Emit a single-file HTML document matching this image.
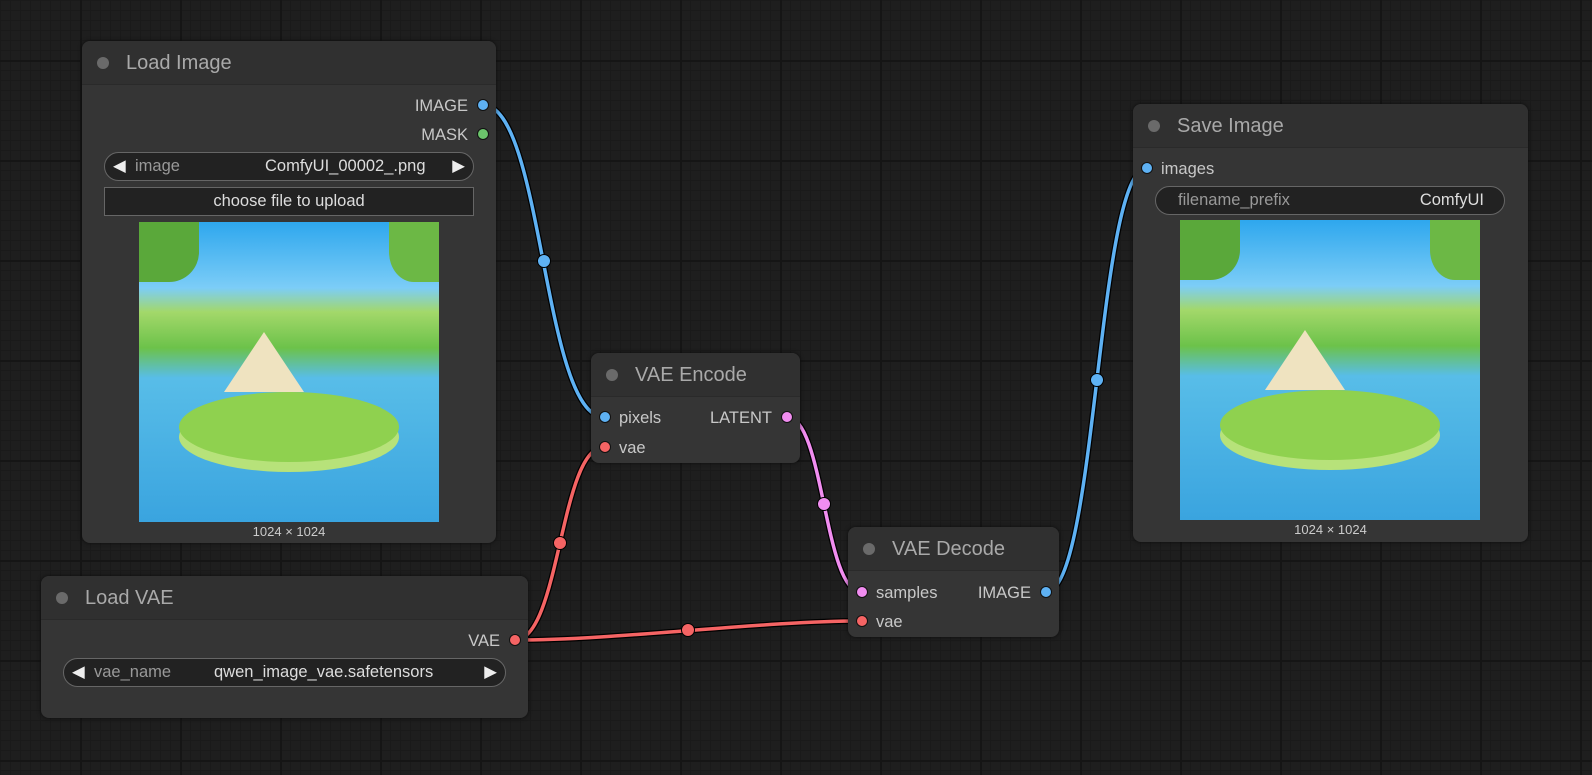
<!DOCTYPE html>
<html><head><meta charset="utf-8"><style>
*{box-sizing:border-box;margin:0;padding:0}
body{width:1592px;height:775px;overflow:hidden;background:#1e1e1e;font-family:"Liberation Sans",sans-serif;position:relative;
background-image:linear-gradient(#151515 2px,transparent 2px),linear-gradient(90deg,#151515 2px,transparent 2px),linear-gradient(#1a1a1a 1px,transparent 1px),linear-gradient(90deg,#1a1a1a 1px,transparent 1px);
background-size:100px 100px,100px 100px,10px 10px,10px 10px;background-position:-20px 60px,-20px 60px,0 0,0 0}
.node{position:absolute;background:#353535;border-radius:8px;box-shadow:0 0 4px rgba(0,0,0,.6)}
.title{height:44px;background:#303030;border-bottom:1px solid #2a2a2a;border-radius:8px 8px 0 0;color:#a9a9a9;font-size:20px;line-height:44px;padding-left:44px;position:relative}
.title:before{content:"";position:absolute;left:15px;top:16px;width:12px;height:12px;border-radius:50%;background:#6a6a6a}
.t{position:absolute;color:#c8c8c8;font-size:16.5px;line-height:18px}
.dot{position:absolute;width:12px;height:12px;border-radius:50%;border:1px solid #111}
.w{position:absolute;height:29px;border:1px solid #666;border-radius:15px;background:#222;font-size:16.5px;line-height:27px;color:#ddd}
.img{position:absolute;overflow:hidden;background:linear-gradient(#2ea7ee 0%,#7ccdf7 22%,#a3d86a 30%,#6cc24a 42%,#58bde8 52%,#3aa4df 100%)}
.cap{position:absolute;color:#ccc;font-size:13px}
</style></head><body>
<svg width="1592" height="775" style="position:absolute;left:0;top:0">
<g fill="none" stroke-linecap="round">
<path d="M483,105 C543,105 543,417 604,417" stroke="#000" stroke-width="6"/><path d="M483,105 C543,105 543,417 604,417" stroke="#5eb1f3" stroke-width="3.5"/>
<path d="M515,640 C560,640 560,447 604,447" stroke="#000" stroke-width="6"/><path d="M515,640 C560,640 560,447 604,447" stroke="#f56464" stroke-width="3.5"/>
<path d="M515,640 C620,640 760,621 861,621" stroke="#000" stroke-width="6"/><path d="M515,640 C620,640 760,621 861,621" stroke="#f56464" stroke-width="3.5"/>
<path d="M787,417 C824,417 824,592 861,592" stroke="#000" stroke-width="6"/><path d="M787,417 C824,417 824,592 861,592" stroke="#f18df0" stroke-width="3.5"/>
<path d="M1046,592 C1097,592 1097,168 1147,168" stroke="#000" stroke-width="6"/><path d="M1046,592 C1097,592 1097,168 1147,168" stroke="#5eb1f3" stroke-width="3.5"/>
</g>
<circle cx="544" cy="261" r="6.5" fill="#5eb1f3" stroke="#000"/>
<circle cx="560" cy="543" r="6.5" fill="#f56464" stroke="#000"/>
<circle cx="688" cy="630" r="6.5" fill="#f56464" stroke="#000"/>
<circle cx="824" cy="504" r="6.5" fill="#f18df0" stroke="#000"/>
<circle cx="1097" cy="380" r="6.5" fill="#5eb1f3" stroke="#000"/>
</svg>

<div class="node" style="left:82px;top:41px;width:414px;height:502px">
<div class="title">Load Image</div>
<div class="t" style="right:28px;top:56px">IMAGE</div><div class="dot" style="right:7px;top:58px;background:#5eb1f3"></div>
<div class="t" style="right:28px;top:85px">MASK</div><div class="dot" style="right:7px;top:87px;background:#6bc46b"></div>
<div class="w" style="left:22px;top:111px;width:370px"><span style="position:absolute;left:8px;color:#eee">◀</span><span style="position:absolute;left:30px;color:#999">image</span><span style="position:absolute;left:160px">ComfyUI_00002_.png</span><span style="position:absolute;right:8px;color:#eee">▶</span></div>
<div style="position:absolute;left:22px;top:146px;width:370px;height:29px;border:1px solid #666;background:#222;color:#ddd;font-size:16.5px;line-height:27px;text-align:center">choose file to upload</div>
<div class="img" style="left:57px;top:181px;width:300px;height:300px"><div style="position:absolute;left:40px;top:170px;width:220px;height:70px;border-radius:50%;background:#8fd14f;box-shadow:0 10px 0 #b7e27a"></div><div style="position:absolute;left:85px;top:110px;width:80px;height:60px;background:#efe3c0;clip-path:polygon(50% 0,100% 100%,0 100%)"></div><div style="position:absolute;left:0;top:0;width:60px;height:60px;background:#5aa83a;border-radius:0 0 50% 0"></div><div style="position:absolute;right:0;top:0;width:50px;height:60px;background:#6cb845;border-radius:0 0 0 50%"></div></div>
<div class="cap" style="left:0;width:414px;text-align:center;top:483px">1024 × 1024</div>
</div>

<div class="node" style="left:41px;top:576px;width:487px;height:142px">
<div class="title">Load VAE</div>
<div class="t" style="right:28px;top:56px">VAE</div><div class="dot" style="right:7px;top:58px;background:#f56464"></div>
<div class="w" style="left:22px;top:82px;width:443px"><span style="position:absolute;left:8px;color:#eee">◀</span><span style="position:absolute;left:30px;color:#999">vae_name</span><span style="position:absolute;left:150px">qwen_image_vae.safetensors</span><span style="position:absolute;right:8px;color:#eee">▶</span></div>
</div>

<div class="node" style="left:591px;top:353px;width:209px;height:110px">
<div class="title">VAE Encode</div>
<div class="dot" style="left:8px;top:58px;background:#5eb1f3"></div><div class="t" style="left:28px;top:56px">pixels</div>
<div class="t" style="right:28px;top:56px">LATENT</div><div class="dot" style="right:7px;top:58px;background:#f18df0"></div>
<div class="dot" style="left:8px;top:88px;background:#f56464"></div><div class="t" style="left:28px;top:86px">vae</div>
</div>

<div class="node" style="left:848px;top:527px;width:211px;height:110px">
<div class="title">VAE Decode</div>
<div class="dot" style="left:8px;top:59px;background:#f18df0"></div><div class="t" style="left:28px;top:57px">samples</div>
<div class="t" style="right:28px;top:57px">IMAGE</div><div class="dot" style="right:7px;top:59px;background:#5eb1f3"></div>
<div class="dot" style="left:8px;top:88px;background:#f56464"></div><div class="t" style="left:28px;top:86px">vae</div>
</div>

<div class="node" style="left:1133px;top:104px;width:395px;height:438px">
<div class="title">Save Image</div>
<div class="dot" style="left:8px;top:58px;background:#5eb1f3"></div><div class="t" style="left:28px;top:56px">images</div>
<div class="w" style="left:22px;top:82px;width:350px"><span style="position:absolute;left:22px;color:#999">filename_prefix</span><span style="position:absolute;right:20px">ComfyUI</span></div>
<div class="img" style="left:47px;top:116px;width:300px;height:300px"><div style="position:absolute;left:40px;top:170px;width:220px;height:70px;border-radius:50%;background:#8fd14f;box-shadow:0 10px 0 #b7e27a"></div><div style="position:absolute;left:85px;top:110px;width:80px;height:60px;background:#efe3c0;clip-path:polygon(50% 0,100% 100%,0 100%)"></div><div style="position:absolute;left:0;top:0;width:60px;height:60px;background:#5aa83a;border-radius:0 0 50% 0"></div><div style="position:absolute;right:0;top:0;width:50px;height:60px;background:#6cb845;border-radius:0 0 0 50%"></div></div>
<div class="cap" style="left:0;width:395px;text-align:center;top:418px">1024 × 1024</div>
</div>
</body></html>
